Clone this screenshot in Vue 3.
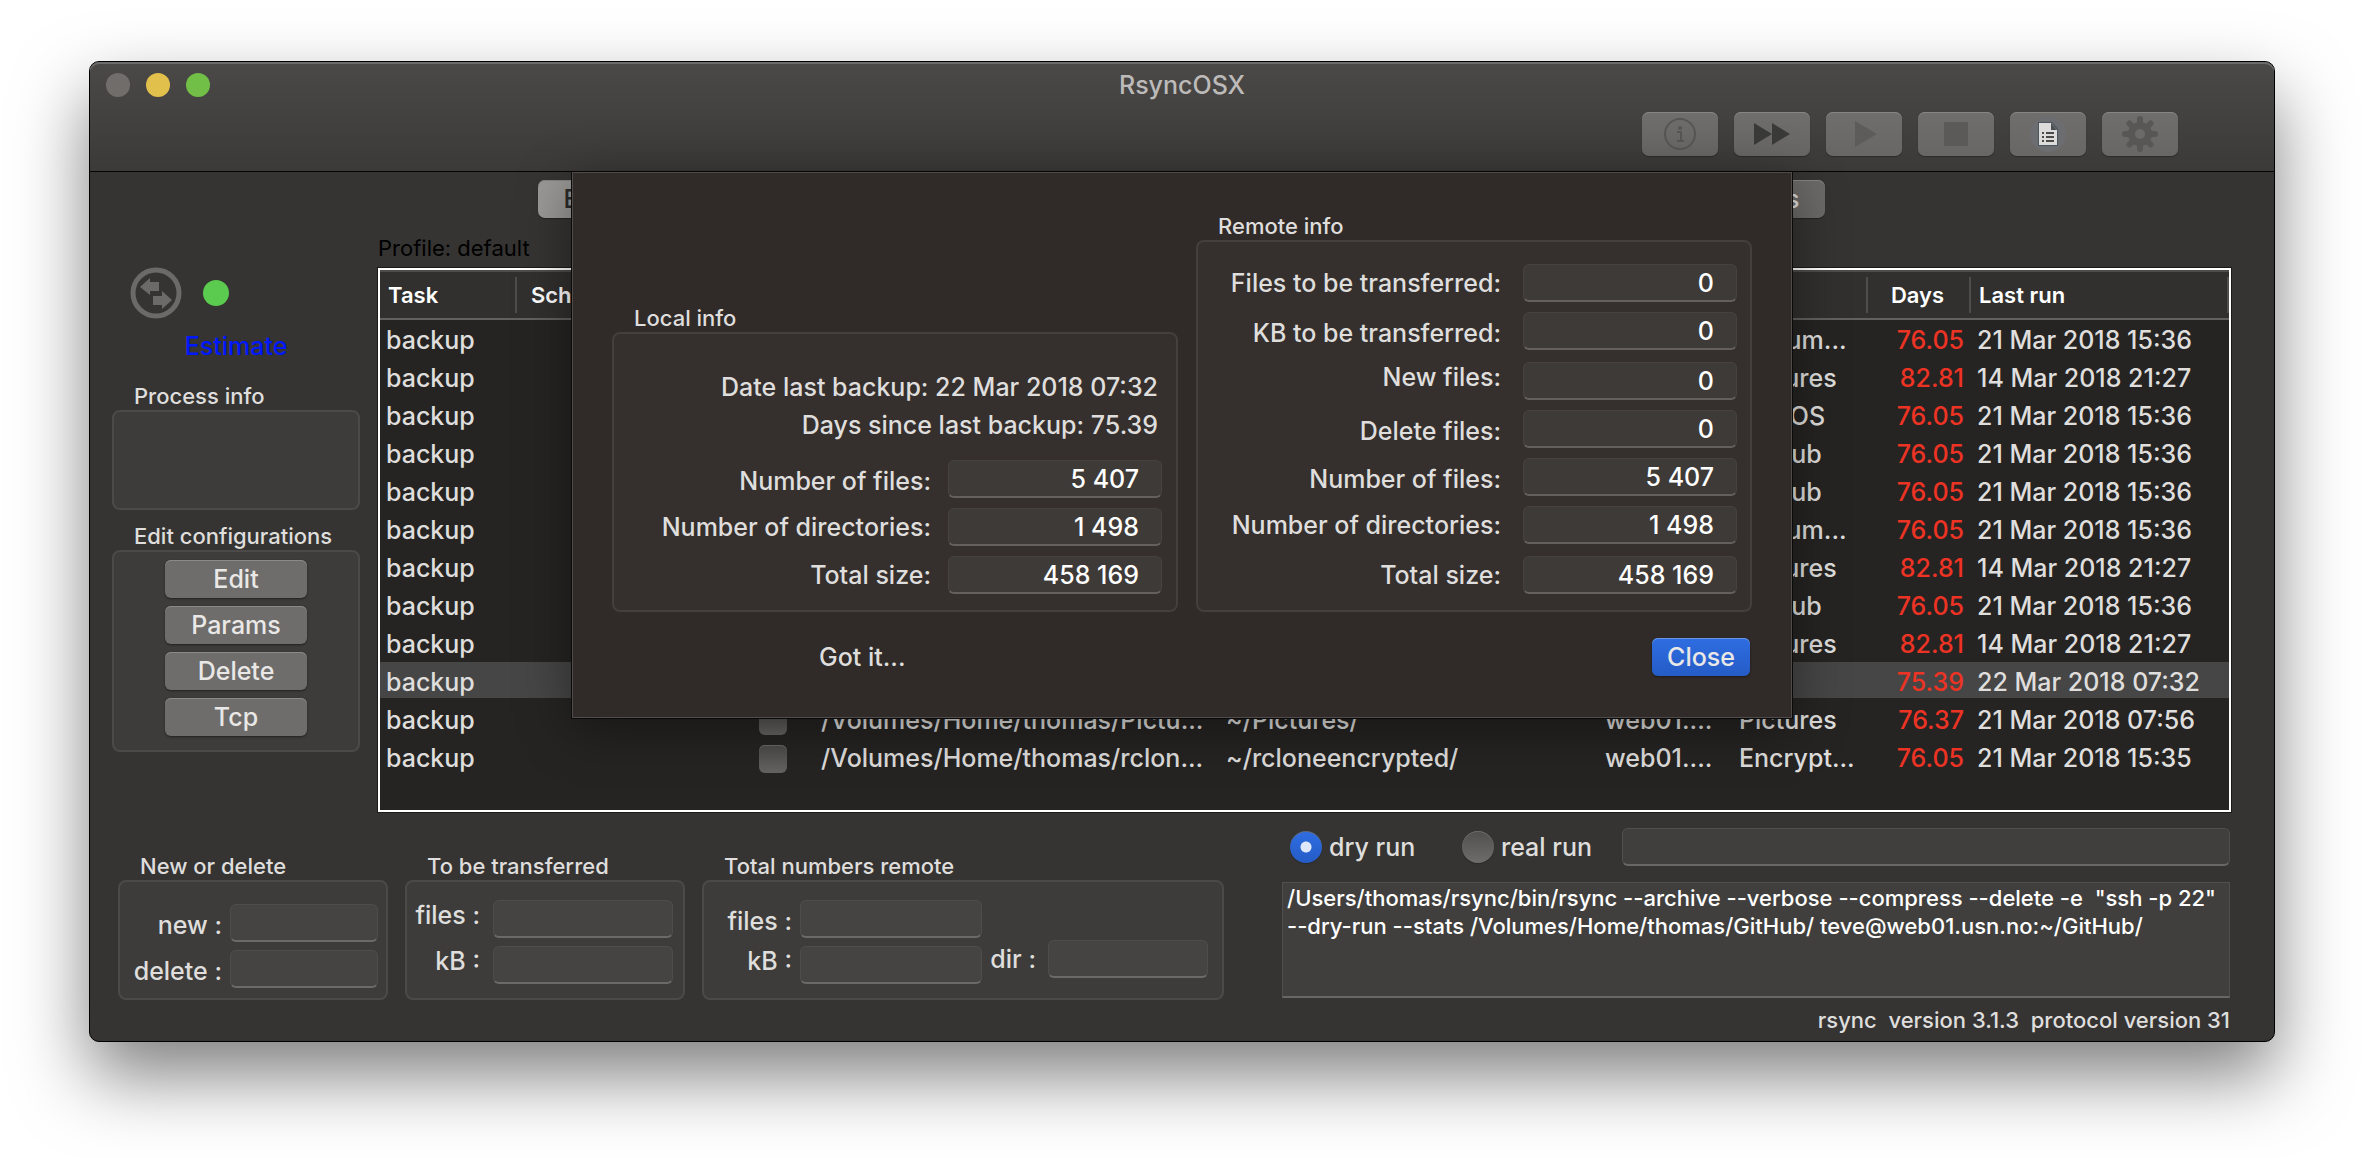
<script setup>
import { ref } from 'vue'

const tabs = ['Execute', 'Synchronize', 'Schedule', 'Restore', 'Profiles']

const last = { a: '21 Mar 2018 15:36', b: '14 Mar 2018 21:27' }
const rows = ref([
  { catalog: 'Docum...', days: '76.05', run: last.a },
  { catalog: 'Pictures', days: '82.81', run: last.b },
  { catalog: 'macOS', days: '76.05', run: last.a },
  { catalog: 'GitHub', days: '76.05', run: last.a },
  { catalog: 'GitHub', days: '76.05', run: last.a },
  { catalog: 'Docum...', days: '76.05', run: last.a },
  { catalog: 'Pictures', days: '82.81', run: last.b },
  { catalog: 'GitHub', days: '76.05', run: last.a },
  { catalog: 'Pictures', days: '82.81', run: last.b },
  { catalog: '', days: '75.39', run: '22 Mar 2018 07:32', selected: true },
  { local: '/Volumes/Home/thomas/Pictu...', remote: '~/Pictures/', server: 'web01....', catalog: 'Pictures', days: '76.37', run: '21 Mar 2018 07:56' },
  { local: '/Volumes/Home/thomas/rclon...', remote: '~/rcloneencrypted/', server: 'web01....', catalog: 'Encrypt...', days: '76.05', run: '21 Mar 2018 15:35' }
])

const editActions = ['Edit', 'Params', 'Delete', 'Tcp']

const localInfo = [
  { id: 'l-files', label: 'Number of files:', value: '5 407', place: 'low' },
  { id: 'l-dirs', label: 'Number of directories:', value: '1 498' },
  { id: 'l-size', label: 'Total size:', value: '458 169' }
]
const remoteInfo = [
  { id: 'r-transfer', label: 'Files to be transferred:', value: '0' },
  { id: 'r-kb', label: 'KB to be transferred:', value: '0', place: 'low' },
  { id: 'r-new', label: 'New files:', value: '0', place: 'high' },
  { id: 'r-delete', label: 'Delete files:', value: '0', place: 'low' },
  { id: 'r-files', label: 'Number of files:', value: '5 407', place: 'low' },
  { id: 'r-dirs', label: 'Number of directories:', value: '1 498' },
  { id: 'r-size', label: 'Total size:', value: '458 169' }
]

const runMode = ref('dry')
const command = ref('/Users/thomas/rsync/bin/rsync --archive --verbose --compress --delete -e  "ssh -p 22"\n--dry-run --stats /Volumes/Home/thomas/GitHub/ teve@web01.usn.no:~/GitHub/')
const version = 'rsync  version 3.1.3  protocol version 31'
</script>

<template>
  <div class="desktop">
    <div class="window">
      <header class="titlebar">
        <div class="title-row">
          <div class="lights">
            <button class="light light-close" aria-label="Close window"></button>
            <button class="light light-min" aria-label="Minimize"></button>
            <button class="light light-max" aria-label="Zoom"></button>
          </div>
          <h1 class="title">RsyncOSX</h1>
        </div>
        <div class="toolbar">
          <button class="tool" aria-label="Information">
            <svg width="34" height="34" viewBox="0 0 34 34">
              <circle cx="17" cy="17" r="15" fill="none" stroke="#575654" stroke-width="2" />
              <circle cx="17" cy="11" r="2" fill="#575654" />
              <path d="M14 15h4v8M14 24h7" fill="none" stroke="#575654" stroke-width="2" />
            </svg>
          </button>
          <button class="tool" aria-label="Run all">
            <svg width="36" height="22" viewBox="0 0 36 22"><path d="M0 0L18 11V0L36 11L18 22V11L0 22z" fill="#3a3a39" /></svg>
          </button>
          <button class="tool tool-play" aria-label="Run">
            <svg width="22" height="26" viewBox="0 0 22 26"><path d="M0 0L22 13L0 26z" fill="#5d5c5a" /></svg>
          </button>
          <button class="tool" aria-label="Stop">
            <svg width="24" height="24" viewBox="0 0 24 24"><path d="M0 0h24v24H0z" fill="#5b5a58" /></svg>
          </button>
          <button class="tool" aria-label="Log">
            <svg width="38" height="38" viewBox="0 0 38 38">
              <circle cx="19" cy="19" r="18" fill="#6b6d70" />
              <path d="M9 7h14l6 7v17H9z" fill="#4b5660" />
              <path d="M10 8h12l6 7v15H10z" fill="#dddcda" />
              <path d="M22 8v7h6z" fill="#4b5052" />
              <path d="M13 18h2M13 22h2M13 26h2M17 18h8M17 22h8M17 26h8" stroke="#4a4a4a" stroke-width="2" />
            </svg>
          </button>
          <button class="tool" aria-label="Settings">
            <svg width="36" height="36" viewBox="0 0 36 36">
              <g stroke="#585755" stroke-width="6" stroke-linecap="round">
                <path d="M18 3v6M18 27v6M3 18h6M27 18h6M7.500 7.500l4 4M24.500 24.500l4 4M28.500 7.500l-4 4M11.500 24.500l-4 4" />
              </g>
              <circle cx="18" cy="18" r="8.500" fill="none" stroke="#585755" stroke-width="7" />
            </svg>
          </button>
        </div>
      </header>

      <main class="content">
        <nav class="tabs">
          <button v-for="(tab, i) in tabs" :key="tab" class="tab" :class="{ active: i === 0 }">{{ tab }}</button>
        </nav>

        <div class="upper">
          <aside class="sidebar">
            <div class="status">
              <svg width="52" height="52" viewBox="0 0 52 52">
                <circle cx="26" cy="26" r="23" fill="none" stroke="#6b6a68" stroke-width="5" />
                <path d="M10 20L20 11V15H29V24H20V28zM42 33L32 24V29H23V38H32V42z" fill="#6b6a68" />
              </svg>
              <span class="dot"></span>
            </div>
            <p class="estimate">Estimate</p>
            <section class="group">
              <h2 class="caption">Process info</h2>
              <div class="box process"></div>
            </section>
            <section class="group">
              <h2 class="caption">Edit configurations</h2>
              <div class="box edits">
                <button v-for="a in editActions" :key="a" class="push">{{ a }}</button>
              </div>
            </section>
          </aside>

          <section class="tasks">
            <p class="profile">Profile: default</p>
            <div class="table-frame">
              <table>
                <colgroup>
                  <col class="c-task" /><col class="c-sched" /><col class="c-check" /><col class="c-local" />
                  <col class="c-remote" /><col class="c-server" /><col class="c-catalog" /><col class="c-days" /><col />
                </colgroup>
                <thead>
                  <tr>
                    <th>Task</th>
                    <th class="sched">Schedule</th>
                    <th></th>
                    <th></th>
                    <th></th>
                    <th></th>
                    <th></th>
                    <th class="center">Days</th>
                    <th>Last run</th>
                  </tr>
                </thead>
                <tbody>
                  <tr v-for="(r, i) in rows" :key="i" :class="{ selected: r.selected }">
                    <td>backup</td>
                    <td></td>
                    <td class="center"><input type="checkbox" class="check" :aria-label="'Batch ' + (i + 1)" /></td>
                    <td>{{ r.local }}</td>
                    <td>{{ r.remote }}</td>
                    <td>{{ r.server }}</td>
                    <td>{{ r.catalog }}</td>
                    <td class="days">{{ r.days }}</td>
                    <td>{{ r.run }}</td>
                  </tr>
                </tbody>
              </table>
            </div>
          </section>
        </div>

        <div class="lower">
          <section class="numbers numbers-new">
            <h2 class="caption">New or delete</h2>
            <div class="box fields">
              <div class="field"><label class="low" for="n-new">new :</label><input id="n-new" type="text" readonly /></div>
              <div class="field"><label class="low" for="n-del">delete :</label><input id="n-del" type="text" readonly /></div>
            </div>
          </section>
          <section class="numbers numbers-transfer">
            <h2 class="caption">To be transferred</h2>
            <div class="box fields">
              <div class="field"><label class="high" for="t-files">files :</label><input id="t-files" type="text" readonly /></div>
              <div class="field"><label class="high" for="t-kb">kB :</label><input id="t-kb" type="text" readonly /></div>
            </div>
          </section>
          <section class="numbers numbers-total">
            <h2 class="caption">Total numbers remote</h2>
            <div class="box totals">
              <div class="fields">
                <div class="field"><label class="low" for="a-files">files :</label><input id="a-files" type="text" readonly /></div>
                <div class="field"><label class="high" for="a-kb">kB :</label><input id="a-kb" type="text" readonly /></div>
              </div>
              <div class="field dir"><label class="low" for="a-dir">dir :</label><input id="a-dir" type="text" readonly /></div>
            </div>
          </section>

          <section class="run">
            <div class="run-row">
              <label class="radio"><input v-model="runMode" type="radio" value="dry" />dry run</label>
              <label class="radio"><input v-model="runMode" type="radio" value="real" />real run</label>
              <input class="plain run-input" type="text" aria-label="Run information" />
            </div>
            <textarea v-model="command" class="plain command" aria-label="Rsync command"></textarea>
            <p class="version">{{ version }}</p>
          </section>
        </div>

        <div class="sheet" role="dialog" aria-label="Backup information">
          <div class="sheet-groups">
            <section class="local">
              <h2 class="caption">Local info</h2>
              <div class="box local-box">
                <p>Date last backup: 22 Mar 2018 07:32</p>
                <p>Days since last backup: 75.39</p>
                <div class="info">
                  <div v-for="f in localInfo" :key="f.id" class="field">
                    <label :for="f.id" :class="f.place">{{ f.label }}</label>
                    <input :id="f.id" type="text" :value="f.value" readonly />
                  </div>
                </div>
              </div>
            </section>
            <section class="remote">
              <h2 class="caption">Remote info</h2>
              <div class="box info remote-box">
                <div v-for="f in remoteInfo" :key="f.id" class="field">
                  <label :for="f.id" :class="f.place">{{ f.label }}</label>
                  <input :id="f.id" type="text" :value="f.value" readonly />
                </div>
              </div>
            </section>
          </div>
          <footer class="sheet-footer">
            <span>Got it...</span>
            <button class="push primary">Close</button>
          </footer>
        </div>
      </main>
    </div>
  </div>
</template>

<style>
body {
  margin: 0;
  background: #fff;
}
</style>

<style scoped>
* {
  box-sizing: border-box;
}
h1, h2, p {
  margin: 0;
  font-weight: inherit;
}
button, input, textarea {
  margin: 0;
  padding: 0;
  border: 0;
  font: inherit;
  color: inherit;
  appearance: none;
  outline: 0;
}
.desktop {
  padding: 61px 89px 117px;
  font: 500 25px/38px Inter, "Liberation Sans", sans-serif;
  color: #dfdedd;
}
.window {
  border: 1px solid #000;
  border-radius: 10px;
  background: #353432;
  box-shadow: 0 34px 72px rgba(0, 0, 0, 0.5);
}

/* title bar */
.titlebar {
  height: 110px;
  padding: 4px 96px 0 16px;
  border-bottom: 1px solid #050505;
  border-radius: 9px 9px 0 0;
  background: linear-gradient(#4b4947, #3b3a38);
  box-shadow: inset 0 2px #6d6b6a;
}
.title-row {
  display: grid;
  grid-template-columns: 1fr auto 1fr;
  align-items: center;
  margin-right: -80px;
}
.lights {
  display: flex;
  gap: 16px;
}
.light {
  width: 24px;
  height: 24px;
  border-radius: 50%;
}
.light-close { background: #716d6b; }
.light-min { background: #e2c04c; }
.light-max { background: #72bf47; }
.title {
  font-size: 25px;
  color: #bdbbba;
}
.toolbar {
  display: flex;
  justify-content: flex-end;
  gap: 16px;
  padding-top: 8px;
}
.tool {
  display: flex;
  align-items: center;
  justify-content: center;
  width: 76px;
  height: 44px;
  border-radius: 7px;
  background: linear-gradient(#6f6e6c, #686765);
  box-shadow: inset 0 1px #868583, 0 1px 1px #2c2b2a;
}
.tool-play { padding-left: 4px; }

.content {
  position: relative;
  padding: 8px 43px 7px 22px;
}
.tabs {
  display: flex;
  width: 1288px;
  margin: 0 auto;
  position: relative;
  left: 10px;
}
.tab {
  flex: 1;
  height: 38px;
  padding: 0 26px;
  background: #6b6a68;
  box-shadow: inset 0 1px #858482, 0 1px 1px #252423;
}
.tab:first-child { text-align: left; border-radius: 7px 0 0 7px; }
.tab:last-child { text-align: right; border-radius: 0 7px 7px 0; }
.tab.active { background: #9a9998; color: #2b2b2b; }

.upper {
  display: flex;
  gap: 18px;
}

/* sidebar */
.sidebar {
  width: 248px;
  padding-top: 49px;
}
.status {
  display: flex;
  align-items: center;
  gap: 21px;
  padding-left: 18px;
}
.dot {
  width: 26px;
  height: 26px;
  border-radius: 50%;
  background: #5bcb50;
}
.estimate {
  margin: 8px 0 17px;
  text-align: center;
  color: #0018ff;
}
.group + .group { margin-top: 12px; }
.caption {
  padding-left: 22px;
  font-size: 22px;
  line-height: 28px;
}
.box {
  border: 2px solid #4b4a48;
  border-radius: 8px;
  background: #3d3c3a;
}
.process { height: 100px; }
.edits {
  display: flex;
  flex-direction: column;
  align-items: center;
  gap: 8px;
  padding: 8px 0 14px;
}
.push {
  width: 142px;
  height: 38px;
  border-radius: 6px;
  background: #6e6d6b;
  color: #e9e8e7;
  box-shadow: inset 0 1px #8b8a88, 0 1px 2px #232221;
}

/* task table */
.tasks {
  flex: 1;
  min-width: 0;
  padding-top: 16px;
}
.profile {
  font-size: 22px;
  font-weight: 400;
  line-height: 28px;
  color: #000;
}
.table-frame {
  height: 544px;
  margin-top: 6px;
  border: 2px solid #fff;
  outline: 1px solid #1b1a19;
  background: #252422;
  overflow: hidden;
}
table {
  width: 100%;
  table-layout: fixed;
  border-spacing: 0;
}
.c-task { width: 137px; }
.c-sched { width: 214px; }
.c-check { width: 84px; }
.c-local { width: 405px; }
.c-remote { width: 379px; }
.c-server { width: 134px; }
.c-catalog { width: 135px; }
.c-days { width: 103px; }
th {
  height: 50px;
  padding: 0 8px;
  border-top: 2px solid #4e4d4b;
  border-bottom: 2px solid #62615f;
  background: linear-gradient(#4e4d4b, #4e4d4b) right center / 2px 36px no-repeat #31302e;
  font-size: 22px;
  font-weight: 600;
  line-height: 28px;
  text-align: left;
  color: #fff;
}
th.sched { padding-left: 14px; }
th.center {
  padding-right: 12px;
  text-align: center;
}
td {
  height: 38px;
  padding: 5px 0 0 6px;
  border-bottom: 2px solid #252422;
  line-height: 31px;
  white-space: nowrap;
}
td.center { padding-left: 0; }
.selected td { background: #464646; }
td.days {
  padding-right: 7px;
  text-align: right;
  color: #ed3324;
}
.check {
  display: block;
  width: 28px;
  height: 28px;
  margin: 0 auto;
  border-radius: 6px;
  background: linear-gradient(#4c4b4a, #656462);
  box-shadow: inset 0 1px #6b6a69;
}

/* lower area */
.lower {
  display: flex;
  align-items: flex-start;
  gap: 17px;
  padding-left: 6px;
}
.numbers { padding-top: 40px; }
.numbers .box {
  height: 120px;
  padding: 18px 10px 0 0;
}
.numbers-new { width: 270px; --field: 148px; }
.numbers-transfer { width: 280px; --field: 180px; }
.numbers-total { width: 522px; --field: 182px; }
.numbers-new .box { padding: 22px 8px 0 0; }
.fields {
  display: flex;
  flex-direction: column;
  gap: 8px;
}
.field {
  display: flex;
  justify-content: flex-end;
  align-items: flex-start;
  gap: 8px;
  height: 38px;
  white-space: nowrap;
}
.numbers-transfer .field { gap: 13px; }
.field label.low { line-height: 42px; }
.field label.high { line-height: 30px; }
.field input {
  width: var(--field);
  height: 38px;
  border: 1px solid #4e4d4b;
  border-bottom: 2px solid #6c6a68;
  border-radius: 6px;
  background: #454442;
}
.totals {
  display: flex;
  justify-content: space-between;
}
.totals .fields { width: 278px; }
.dir {
  --field: 160px;
  margin-top: 40px;
  padding-right: 4px;
}
.dir.field { gap: 12px; }
.dir.field label { line-height: 38px; }

.run {
  flex: 1;
  margin-left: 41px;
  margin-right: 1px;
  padding-top: 16px;
}
.run-row {
  display: flex;
  align-items: center;
  padding-left: 8px;
}
.radio {
  display: flex;
  align-items: center;
  gap: 7px;
  width: 172px;
}
.radio + .radio { width: 160px; }
.radio input {
  width: 32px;
  height: 32px;
  border-radius: 50%;
  background: linear-gradient(#504f4e, #6f6d6c);
  box-shadow: inset 0 1px #6b6a69, 0 1px 1px #2a2928;
}
.radio input:checked {
  background: radial-gradient(circle, #dfe7fa 5px, transparent 6px), linear-gradient(#2e6de2, #255cc6);
}
.plain {
  border: 1px solid #504f4d;
  border-bottom: 2px solid #686765;
  background: #403f3d;
}
.run-input {
  flex: 1;
  min-width: 0;
  height: 38px;
  border-radius: 6px;
}
.command {
  display: block;
  width: 100%;
  height: 116px;
  margin-top: 16px;
  padding: 1px 4px;
  resize: none;
  overflow: hidden;
  font-size: 22px;
  line-height: 28px;
  color: #fff;
}
.version {
  margin-top: 8px;
  font-size: 22px;
  line-height: 28px;
  text-align: right;
  white-space: pre;
}

/* sheet */
.sheet {
  position: absolute;
  top: 0;
  left: 0;
  right: 0;
  width: 1222px;
  margin: 0 auto;
  padding: 40px 40px 0 40px;
  border: 1px solid #0a0a0a;
  border-top: 0;
  background: #302b28;
  box-shadow: inset 0 0 0 1px #504c4a, 0 10px 50px rgba(0, 0, 0, 0.4);
}
.sheet .box {
  border-color: #443f3c;
  background: #35302d;
}
.sheet-groups {
  display: flex;
  align-items: flex-end;
  justify-content: space-between;
}
.local { width: 566px; }
.remote { width: 556px; }
.local-box {
  height: 280px;
  padding: 34px 14px 0 0;
}
.local-box p {
  padding-right: 4px;
  text-align: right;
}
.info {
  display: grid;
  --field: 214px;
}
.info .field { gap: 17px; }
.info .field input {
  padding-right: 22px;
  border-color: #47423f;
  border-bottom-color: #65605d;
  background: #3e3a37;
  color: #fff;
  text-align: right;
}
.local-box .info {
  grid-auto-rows: 48px;
  padding-top: 16px;
}
.remote-box {
  height: 372px;
  padding: 22px 13px 0 0;
  grid-template-rows: 48px 50px 48px 48px 48px 50px 38px;
}
.remote-box .field { gap: 22px; }
.sheet-footer {
  display: flex;
  justify-content: space-between;
  align-items: center;
  padding: 26px 2px 42px 207px;
}
.primary {
  width: 98px;
  background: linear-gradient(#2e6de2, #255cc6);
  box-shadow: inset 0 1px #6a95e8, 0 1px 2px #1d1a18;
}
</style>
